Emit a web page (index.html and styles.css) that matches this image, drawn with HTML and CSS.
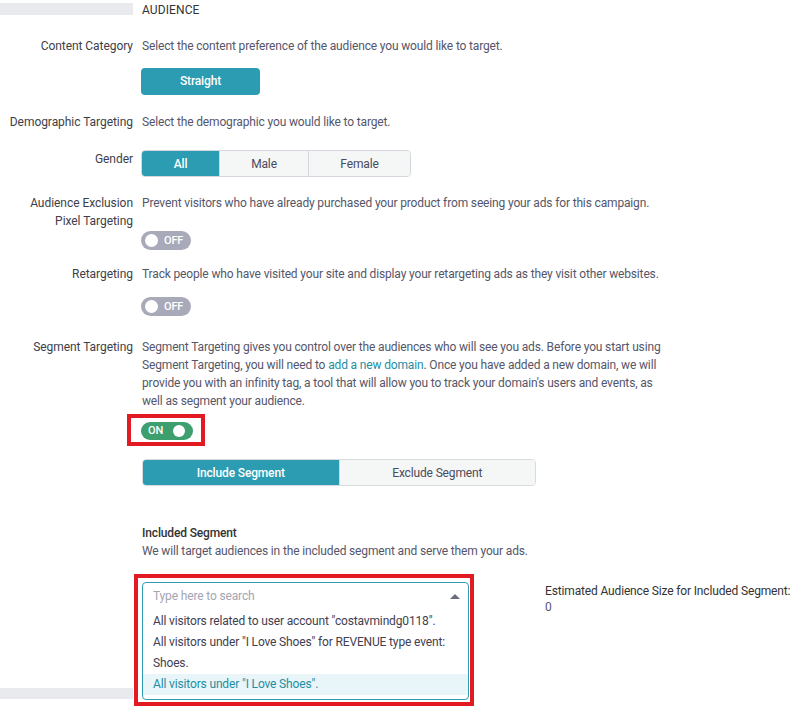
FILE: index.html
```html
<!DOCTYPE html>
<html lang="en">
<head>
    <meta charset="UTF-8">
    <meta name="viewport" content="width=device-width, initial-scale=1.0">
    <title>Audience</title>
    <link rel="stylesheet" href="styles.css">
</head>
<body>
    <div class="form">
        <!-- Cabeçalho da seção -->
        <div class="row head">
            <div class="label"><div class="side-bar"></div></div>
            <div class="content title">AUDIENCE</div>
        </div>

        <div class="row r-category">
            <div class="label">Content Category</div>
            <div class="content">
                <p class="desc">Select the content preference of the audience you would like to target.</p>
                <button class="btn-primary">Straight</button>
            </div>
        </div>

        <div class="row r-demo">
            <div class="label">Demographic Targeting</div>
            <div class="content">
                <p class="desc">Select the demographic you would like to target.</p>
            </div>
        </div>

        <div class="row r-gender">
            <div class="label">Gender</div>
            <div class="content">
                <div class="btn-group gender">
                    <button class="active">All</button>
                    <button>Male</button>
                    <button>Female</button>
                </div>
            </div>
        </div>

        <div class="row r-exclusion">
            <div class="label">Audience Exclusion<br>Pixel Targeting</div>
            <div class="content">
                <p class="desc">Prevent visitors who have already purchased your product from seeing your ads for this campaign.</p>
                <div class="toggle off t-first"><span class="knob"></span><span class="txt">OFF</span></div>
            </div>
        </div>

        <div class="row r-retarget">
            <div class="label">Retargeting</div>
            <div class="content">
                <p class="desc">Track people who have visited your site and display your retargeting ads as they visit other websites.</p>
                <div class="toggle off t-second"><span class="knob"></span><span class="txt">OFF</span></div>
            </div>
        </div>

        <div class="row r-segment">
            <div class="label">Segment Targeting</div>
            <div class="content">
                <p class="desc wrap">Segment Targeting gives you control over the audiences who will see you ads. Before you start using Segment Targeting, you will need to <a href="#">add a new domain</a>. Once you have added a new domain, we will provide you with an infinity tag, a tool that will allow you to track your domain's users and events, as well as segment your audience.</p>
                <div class="mark mark-toggle">
                    <div class="toggle on"><span class="txt">ON</span><span class="knob"></span></div>
                </div>
                <div class="btn-group segment">
                    <button class="active">Include Segment</button>
                    <button>Exclude Segment</button>
                </div>
                <h4 class="sub-title">Included Segment</h4>
                <p class="desc">We will target audiences in the included segment and serve them your ads.</p>
            </div>
        </div>

        <div class="row r-select">
            <div class="label"><div class="side-bar bottom"></div></div>
            <div class="content select-area">
                <div class="mark mark-select">
                    <div class="dropdown">
                        <div class="search">
                            <input type="text" placeholder="Type here to search">
                            <span class="caret"></span>
                        </div>
                        <ul class="options">
                            <li>All visitors related to user account "costavmindg0118".</li>
                            <li>All visitors under "I Love Shoes" for REVENUE type event: Shoes.</li>
                            <li class="hover">All visitors under "I Love Shoes".</li>
                        </ul>
                    </div>
                </div>
                <div class="estimate">
                    <div class="est-title">Estimated Audience Size for Included Segment:</div>
                    <div class="est-value">0</div>
                </div>
            </div>
        </div>
    </div>
</body>
</html>
```

FILE: styles.css
```css
body {
    margin: 0;
    font-family: 'Roboto', 'Liberation Sans', sans-serif;
    font-size: 12px;
    line-height: 18px;
    color: #55566a;
    background: #fff;
    overflow: hidden;
    letter-spacing: -0.15px;
}
p, h4, ul {
    margin: 0;
}
button {
    font-family: inherit;
    font-size: 12px;
    letter-spacing: -0.15px;
    cursor: pointer;
}
a {
    color: #1f8da3;
    text-decoration: none;
}

.row {
    display: grid;
    grid-template-columns: 133px 1fr;
    column-gap: 9px;
}
.label {
    text-align: right;
    color: #3d3e4a;
    letter-spacing: -0.05px;
}
.content {
    min-width: 0;
}

/* Cabeçalho */
.head {
    padding-top: 1px;
}
.side-bar {
    height: 12px;
    margin-top: 2px;
    background-color: #e9eaed;
}
.side-bar.bottom {
    height: 11px;
    margin-top: 114px;
}
.title {
    color: #333;
    letter-spacing: 0.1px;
}

.r-category { margin-top: 18px; }
.r-demo { margin-top: 18px; }
.r-gender { margin-top: 19px; }
.r-exclusion { margin-top: 17px; }
.r-retarget { margin-top: 15px; }
.r-segment { margin-top: 22px; }

.desc {
    white-space: nowrap;
}
.desc.wrap {
    white-space: normal;
    max-width: 524px;
}

.btn-primary {
    display: block;
    margin: 13px 0 0 -1px;
    width: 119px;
    height: 27px;
    padding: 0 0 1px;
    border: none;
    border-radius: 4px;
    background-color: #2b9cb1;
    color: #fff;
    font-weight: 500;
}

/* Grupo de botões */
.btn-group {
    display: flex;
    height: 27px;
    border: 1px solid #d4d7dd;
    border-radius: 4px;
    overflow: hidden;
    box-sizing: border-box;
}
.btn-group button {
    border: none;
    border-left: 1px solid #d4d7dd;
    background-color: #f5f6f6;
    color: #4a4b5c;
    padding: 0;
}
.btn-group button:first-child {
    border-left: none;
}
.btn-group button.active {
    background-color: #2b9cb1;
    color: #fff;
    font-weight: 500;
}
.gender {
    width: 270px;
    margin-left: -1px;
}
.gender button:nth-child(1) { width: 77px; }
.gender button:nth-child(2) { width: 89px; }
.gender button:nth-child(3) { flex: 1; }

.segment {
    width: 394px;
    margin-top: 13px;
    border-color: #d9dbe0;
}
.segment button {
    flex: 1;
}

/* Toggle */
.toggle {
    display: flex;
    align-items: center;
    width: 50px;
    height: 19px;
    border-radius: 10px;
    box-sizing: border-box;
    color: #fff;
    font-size: 11px;
    font-weight: 500;
    margin-left: -1px;
}
.toggle .knob {
    width: 13px;
    height: 13px;
    border-radius: 50%;
    background-color: #fff;
}
.toggle.off {
    background-color: #a9aab9;
    padding-left: 4px;
}
.toggle.off .txt {
    margin-left: 6px;
}
.toggle.on {
    background-color: #3d9e6e;
    padding-left: 7px;
    height: 18px;
    width: 52px;
}
.toggle.on .txt {
    margin-right: 10px;
}
.toggle.on .knob {
    width: 12px;
    height: 12px;
}
.t-first { margin-top: 19px; }
.t-second { margin-top: 14px; }

/* Marcações vermelhas */
.mark {
    border: 4px solid #e21b23;
    box-sizing: border-box;
}
.mark-toggle {
    display: inline-block;
    margin: 4px 0 0 -15px;
    padding: 4px 8px 2px 10px;
    vertical-align: top;
}
.mark-toggle .toggle {
    margin-left: 0;
}
.mark-select {
    margin-left: -8px;
    padding: 4px 1px 2px 4px;
    flex-shrink: 0;
}

.sub-title {
    margin-top: 38px;
    font-size: 12px;
    font-weight: 500;
    color: #333;
}

/* Dropdown */
.r-select {
    margin-top: 14px;
}
.select-area {
    display: flex;
    align-items: flex-start;
}
.dropdown {
    width: 327px;
    height: 118px;
    border: 1px solid #2b9cb1;
    border-radius: 4px;
    box-sizing: border-box;
    overflow: hidden;
}
.search {
    display: flex;
    align-items: center;
    padding: 4px 8px 6px 10px;
}
.search input {
    flex: 1;
    border: none;
    outline: none;
    padding: 0;
    font-family: inherit;
    font-size: 12px;
    letter-spacing: -0.15px;
    line-height: 18px;
    height: 18px;
    color: #333;
}
.search input::placeholder {
    color: #a3a5b3;
}
.caret {
    width: 0;
    height: 0;
    border-left: 5px solid transparent;
    border-right: 5px solid transparent;
    border-bottom: 5px solid #6a6d80;
}
.options {
    list-style: none;
    padding: 0;
}
.options li {
    padding: 0 10px;
    line-height: 21px;
    color: #3f4050;
}
.options li.hover {
    background-color: #e8f5f9;
    color: #1f8da3;
}

.estimate {
    margin: 8px 0 0 71px;
    white-space: nowrap;
}
.est-title {
    color: #333;
}
.est-value {
    color: #55566a;
    margin-top: -2px;
}
```
